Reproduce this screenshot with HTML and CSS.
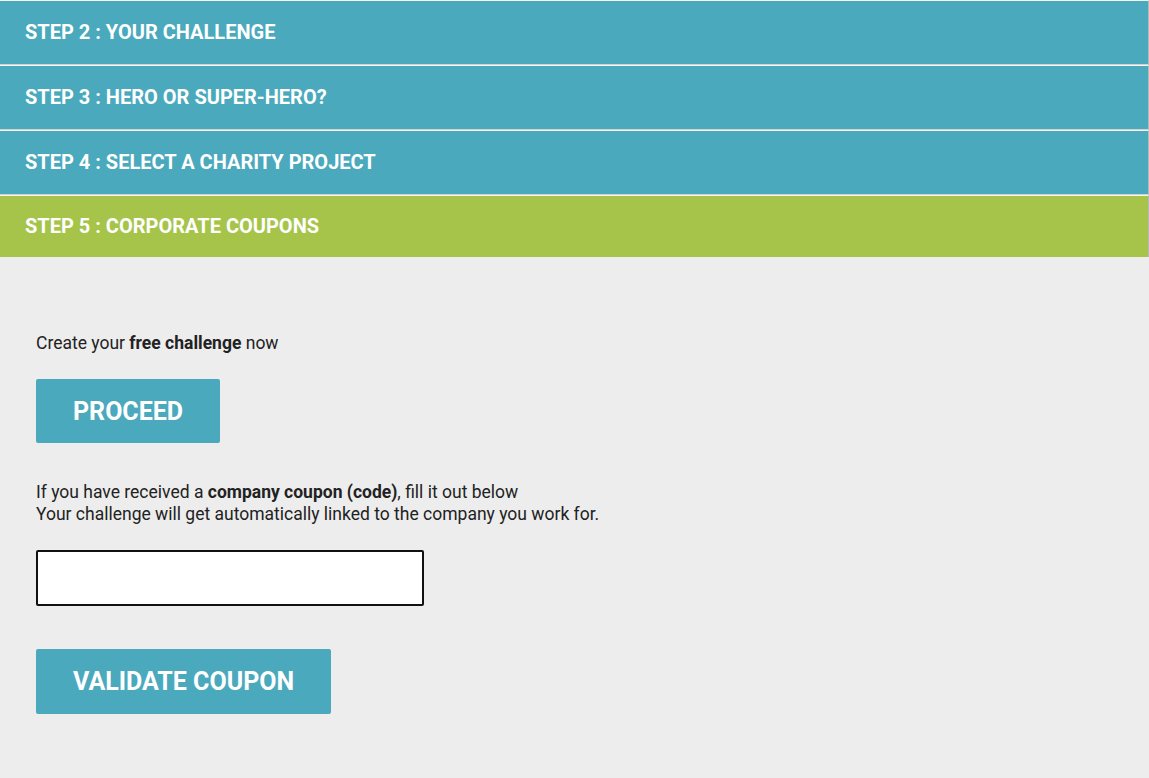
FILE: index.html
```html
<!DOCTYPE html>
<html lang="en">
<head>
  <meta charset="UTF-8">
  <meta name="viewport" content="width=device-width, initial-scale=1.0">
  <title>Create your challenge</title>
  <link rel="stylesheet" href="styles.css">
</head>
<body>
  <div class="wizard">
    <div class="step">STEP 2 : YOUR CHALLENGE</div>
    <div class="step">STEP 3 : HERO OR SUPER-HERO?</div>
    <div class="step">STEP 4 : SELECT A CHARITY PROJECT</div>
    <div class="step active">STEP 5 : CORPORATE COUPONS</div>

    <!-- Step 5 content -->
    <div class="step-body">
      <p class="intro">Create your <strong>free challenge</strong> now</p>
      <button type="button" class="btn">PROCEED</button>

      <p class="coupon-info">
        If you have received a <strong>company coupon (code)</strong>, fill it out below<br>
        Your challenge will get automatically linked to the company you work for.
      </p>
      <input type="text" class="coupon-input" aria-label="Coupon code">
      <button type="button" class="btn btn-validate">VALIDATE COUPON</button>
    </div>
  </div>
</body>
</html>
```

FILE: styles.css
```css
body {
  font-family: Roboto, "Liberation Sans", sans-serif;
  margin: 0;
  padding: 0;
  background: #ededed;
  color: #222;
}

.wizard {
  min-height: 778px;
}

.step {
  background: #4aa9bc;
  color: white;
  font-size: 20px;
  font-weight: bold;
  height: 63px;
  line-height: 63px;
  padding-left: 25px;
  border-top: 1px solid #f4f4f4;
  border-bottom: 1px solid #d2d2d2;
  border-right: 1px solid #b8b8b8;
}

.step.active {
  background: #a6c44a;
  height: 61px;
  line-height: 61px;
  border-bottom: none;
}

.step-body {
  padding: 75px 36px 40px;
  display: flex;
  flex-direction: column;
  align-items: flex-start;
}

.step-body p {
  margin: 0;
  font-size: 17.5px;
  line-height: 22px;
}

.btn {
  background: #4aa9bc;
  color: white;
  border: none;
  border-radius: 2px;
  font-family: Roboto, "Liberation Sans", sans-serif;
  font-size: 25px;
  font-weight: bold;
  height: 64px;
  padding: 0 37px;
  margin-top: 25px;
  cursor: pointer;
}

.coupon-info {
  margin-top: 38px !important;
}

.coupon-input {
  width: 388px;
  height: 56px;
  box-sizing: border-box;
  border: 2px solid #111;
  border-radius: 2px;
  background: white;
  margin-top: 25px;
  font-size: 16px;
  padding: 0 10px;
}

.btn-validate {
  height: 65px;
  margin-top: 43px;
}
```
